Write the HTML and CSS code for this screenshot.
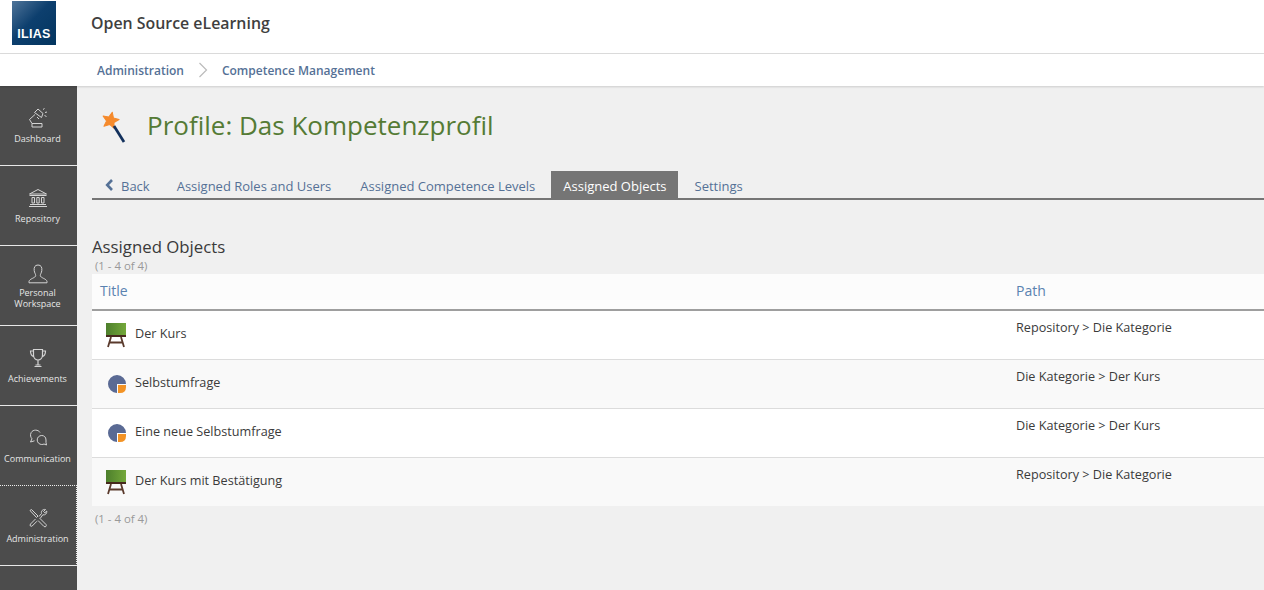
FILE: index.html
```html
<!DOCTYPE html>
<html lang="en">
<head>
  <meta charset="UTF-8"/>
  <title>Competence Management</title>
  <link rel="stylesheet" href="styles.css">
</head>
<body>

<svg width="0" height="0" class="defs">
  <symbol id="icon-course" viewBox="0 0 22 26">
    <defs>
      <linearGradient id="board" x1="0" y1="0" x2="1" y2="0">
        <stop offset="0" stop-color="#4d7f2c"/>
        <stop offset="1" stop-color="#74a83a"/>
      </linearGradient>
    </defs>
    <rect x="1" y="1" width="20" height="12" fill="url(#board)"/>
    <rect x="1" y="13" width="20" height="2" fill="#46291d"/>
    <path d="M6 15 L3 25 M16 15 L19 25 M4.500 20.500 H17.500" stroke="#5a3a2c" stroke-width="1.800" fill="none"/>
  </symbol>
  <symbol id="icon-survey" viewBox="0 0 18 18">
    <path d="M9 0 A9 9 0 1 0 9 18 V9 H18 A9 9 0 0 0 9 0 Z" fill="#5a6a94"/>
    <path d="M10 10 H18 V12 Q18 18 12 18 H10 Z" fill="#f39325"/>
  </symbol>
</svg>

<header class="top-bar">
  <div class="logo"><span>ILIAS</span></div>
  <div class="site-title">Open Source eLearning</div>
</header>

<nav class="breadcrumb">
  <a href="#">Administration</a>
  <svg class="crumb-sep" width="10" height="16" viewBox="0 0 10 16"><path d="M1.500 1 L8.500 8 L1.500 15" fill="none" stroke="#bbb" stroke-width="1.200"/></svg>
  <a href="#">Competence Management</a>
</nav>

<div class="main">
  <aside class="sidebar">
    <a class="side-item" href="#">
      <svg viewBox="0 0 24 24" width="24" height="24" class="side-icon"><path d="M6 17.500 H16 V21 H6 Z M6 17.500 L3.500 13.500 L9 8.500 M8.500 6.500 L12 3 L17 7.500 L15.500 11.500 Z M11 11 L13 13 M17 3.500 L18.500 2.500 M19 6.500 L21 6 M18.500 9.500 L20.500 10.500" fill="none" stroke="#d4d4d4" stroke-width="1"/></svg>
      <span>Dashboard</span>
    </a>
    <a class="side-item" href="#">
      <svg viewBox="0 0 24 24" width="24" height="24" class="side-icon"><path d="M3.500 8 L12 3.500 L20.500 8 Z M3.500 9.500 H20.500 M3 20.500 H21 M4 18.500 H20 M6 11.500 H8.500 V17 H6 Z M10.800 11.500 H13.200 V17 H10.800 Z M15.500 11.500 H18 V17 H15.500 Z" fill="none" stroke="#d4d4d4" stroke-width="1"/></svg>
      <span>Repository</span>
    </a>
    <a class="side-item two-line" href="#">
      <svg viewBox="0 0 24 24" width="24" height="24" class="side-icon"><path d="M12 3 C8.800 3 7.800 5.500 8.200 8.500 C8.500 11 9.700 12 9.700 13.500 C9.700 16 3.500 16.500 3 19.500 V20.800 H21 V19.500 C20.500 16.500 14.300 16 14.300 13.500 C14.300 12 15.500 11 15.800 8.500 C16.200 5.500 15.200 3 12 3 Z" fill="none" stroke="#d4d4d4" stroke-width="1"/></svg>
      <span>Personal<br>Workspace</span>
    </a>
    <a class="side-item" href="#">
      <svg viewBox="0 0 24 24" width="24" height="24" class="side-icon"><path d="M7.500 3.500 H16.500 V9 C16.500 12 14.500 14 12 14 C9.500 14 7.500 12 7.500 9 Z M7.500 5 H4.500 C4.500 8.500 5.500 10 8 10.800 M16.500 5 H19.500 C19.500 8.500 18.500 10 16 10.800 M12 14 V19 M8.500 20.500 H15.500 M9.500 19 H14.500" fill="none" stroke="#d4d4d4" stroke-width="1.200"/></svg>
      <span>Achievements</span>
    </a>
    <a class="side-item" href="#">
      <svg viewBox="0 0 24 24" width="24" height="24" class="side-icon"><path d="M14 6.500 C12.500 3.500 7 3.200 5.200 6.500 C3.800 9 4.800 11.500 6 12.800 L4.500 16 L8.500 14.800 M20 14 C20 11 18 9.500 15.800 9.500 C13 9.500 11.200 11.500 11.200 14 C11.200 16.500 13.300 18.500 15.800 18.500 C16.600 18.500 17.400 18.300 18 18 L20.500 19 L20 16.500 Z" fill="none" stroke="#d4d4d4" stroke-width="1"/></svg>
      <span>Communication</span>
    </a>
    <a class="side-item current" href="#">
      <svg viewBox="0 0 24 24" width="24" height="24" class="side-icon"><path d="M4 4.500 L5.500 3.500 L12 10 L10.500 11.500 Z M13.500 12 L20 18.500 C21 20 19.500 21.500 18 20.500 L12 14.500 M9.500 13 L4.500 18 C3.300 19.500 4.800 21 6.200 20 L11 15.200 M13 10.500 L15.500 7.500 C14.800 5 16.800 3 19.500 3.500 L17.500 5.500 L18.800 6.800 L20.800 5 C21.200 7.500 19 9.500 16.800 8.800 L14.500 12" fill="none" stroke="#d4d4d4" stroke-width="1"/></svg>
      <span>Administration</span>
    </a>
  </aside>

  <main class="content">
    <div class="page-head">
      <svg class="head-icon" width="28" height="36" viewBox="0 0 28 36">
        <polygon transform="translate(11.500 13.500) rotate(12)" points="0,-8.500 2.400,-3 8.200,-2.800 3.800,1.200 5.200,7 0,4 -5.200,7 -3.800,1.200 -8.200,-2.800 -2.400,-3" fill="#f58a2c" stroke="#f58a2c" stroke-linejoin="round"/>
        <path d="M15 19 L25 35" stroke="#12305c" stroke-width="2.800" fill="none"/>
      </svg>
      <h1>Profile: Das Kompetenzprofil</h1>
    </div>

    <div class="tabs">
      <a class="tab back" href="#"><svg width="9" height="12" viewBox="0 0 9 12"><path d="M7 1 L2.200 6 L7 11" fill="none" stroke="#557196" stroke-width="2.600"/></svg>Back</a>
      <a class="tab" href="#">Assigned Roles and Users</a>
      <a class="tab" href="#">Assigned Competence Levels</a>
      <a class="tab active" href="#">Assigned Objects</a>
      <a class="tab" href="#">Settings</a>
    </div>

    <h2>Assigned Objects</h2>
    <div class="count">(1 - 4 of 4)</div>
    <table class="objects">
      <thead>
        <tr><th class="col-title">Title</th><th>Path</th></tr>
      </thead>
      <tbody>
        <tr>
          <td class="col-title"><div class="obj"><svg class="obj-icon" width="22" height="26"><use href="#icon-course"/></svg><span>Der Kurs</span></div></td>
          <td>Repository &gt; Die Kategorie</td>
        </tr>
        <tr>
          <td class="col-title"><div class="obj"><svg class="obj-icon survey" width="18" height="18"><use href="#icon-survey"/></svg><span>Selbstumfrage</span></div></td>
          <td>Die Kategorie &gt; Der Kurs</td>
        </tr>
        <tr>
          <td class="col-title"><div class="obj"><svg class="obj-icon survey" width="18" height="18"><use href="#icon-survey"/></svg><span>Eine neue Selbstumfrage</span></div></td>
          <td>Die Kategorie &gt; Der Kurs</td>
        </tr>
        <tr>
          <td class="col-title"><div class="obj"><svg class="obj-icon" width="22" height="26"><use href="#icon-course"/></svg><span>Der Kurs mit Bestätigung</span></div></td>
          <td>Repository &gt; Die Kategorie</td>
        </tr>
      </tbody>
    </table>
    <div class="count bottom">(1 - 4 of 4)</div>
  </main>
</div>

</body>
</html>
```

FILE: styles.css
```css
html, body { height: 100%; }
body {
  margin: 0;
  height: 590px;
  overflow: hidden;
  display: flex;
  flex-direction: column;
  font-family: "Open Sans", sans-serif;
  font-size: 13px;
  color: #333;
  background: #f0f0f0;
}
a { text-decoration: none; }
.defs { position: absolute; }

.top-bar {
  height: 53px;
  flex: none;
  display: flex;
  align-items: flex-start;
  background: #fff;
  border-bottom: 1px solid #dcdcdc;
}
.logo {
  width: 44px; height: 44px;
  margin: 1px 0 0 12px;
  background: linear-gradient(135deg, #4f7499 0%, #0d3f6e 45%, #03355f 100%);
  color: #fff;
  font-family: "Liberation Sans", sans-serif;
  font-weight: bold;
  font-size: 12.500px;
  display: flex;
  align-items: flex-end;
  justify-content: center;
}
.logo span { padding-bottom: 4px; letter-spacing: 0.300px; }
.site-title {
  margin: 12px 0 0 35px;
  font-size: 15.900px;
  font-weight: 600;
  line-height: 22px;
  color: #3f3f3f;
}

.breadcrumb {
  height: 32px;
  flex: none;
  display: flex;
  align-items: center;
  padding-left: 97px;
  background: #fff;
  box-shadow: 0 1px 2px rgba(0,0,0,0.15);
  position: relative;
  z-index: 1;
  font-size: 12px;
  font-weight: 600;
}
.breadcrumb a { color: #557196; }
.crumb-sep { margin: 0 14px 0 14px; }

.main { flex: 1; display: flex; min-height: 0; }

.sidebar {
  width: 77px;
  flex: none;
  background: #4c4c4c;
  display: flex;
  flex-direction: column;
}
.side-item {
  height: 59px;
  flex: none;
  border-bottom: 1px solid #e8e8e8;
  display: flex;
  flex-direction: column;
  align-items: center;
  padding: 20px 2px 0 0;
  color: #e6e6e6;
  font-size: 9px;
  line-height: 11px;
  text-align: center;
}
.side-icon { display: block; margin-bottom: 3px; flex: none; }
.side-item.two-line { height: 63px; padding-top: 16px; }
.side-item.two-line .side-icon { margin-bottom: 1px; }
/* dotted focus frame, no line on the left */
.side-item.current {
  margin-top: -1px;
  padding-top: 20px;
  padding-right: 1px;
  border-top: 1px dotted #eee;
  border-right: 1px dotted #eee;
  background: #4c4c4c;
}

.content { flex: 1; min-width: 0; padding: 0 0 0 15px; }

.page-head {
  display: flex;
  align-items: flex-start;
  height: 85px;
  padding-top: 21px;
  box-sizing: border-box;
}
.head-icon { margin: 0 0 0 7px; flex: none; }
h1 {
  margin: 0 0 0 20px;
  font-size: 26px;
  font-weight: 400;
  line-height: 36px;
  color: #557b35;
}

.tabs {
  display: flex;
  height: 27px;
  border-bottom: 2px solid #757575;
  font-size: 13px;
}
.tab {
  padding: 0 12px;
  margin-right: 4px;
  line-height: 30px;
  color: #557196;
}
.tab.back { padding: 0 11px 0 13px; }
.tab.back svg { margin-right: 7px; }
.tab:nth-child(2) { margin-right: 5px; }
.tab.active { background: #757575; color: #fff; padding-right: 11px; margin-right: 5px; }

h2 {
  margin: 35px 0 0;
  font-size: 16.800px;
  font-weight: 400;
  line-height: 24px;
  color: #3a3a3a;
}
.count {
  font-size: 11.400px;
  line-height: 14px;
  color: #999;
  padding-left: 3px;
}
.count.bottom { margin-top: 6px; }

.objects {
  width: 100%;
  border-collapse: collapse;
  background: #fff;
  margin-top: 1px;
}
th {
  height: 36px;
  padding: 0 8px 2px;
  box-sizing: border-box;
  text-align: left;
  font-size: 14px;
  font-weight: 400;
  color: #5a82b0;
  background: #fcfcfc;
  border-bottom: 2px solid #9e9e9e;
}
td {
  height: 49px;
  padding: 8px 8px 0;
  box-sizing: border-box;
  vertical-align: top;
  font-size: 12.650px;
  line-height: 17px;
  color: #3b3b3b;
  border-bottom: 1px solid #dcdcdc;
}
tbody tr:nth-child(even) td { background: #f9f9f9; }
tbody tr:last-child td { border-bottom: none; }
.col-title { width: 916px; }
td.col-title { padding: 0 8px; vertical-align: middle; }
.obj { display: flex; align-items: center; }
.obj span { margin-bottom: 3px; }
.obj-icon { flex: none; margin: 0 8px 0 5px; }
.obj-icon.survey { margin: 0 9px 0 8px; }
```
